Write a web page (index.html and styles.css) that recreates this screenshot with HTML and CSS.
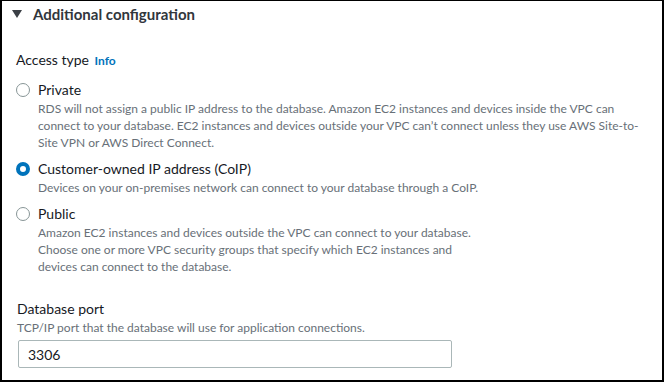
FILE: index.html
```html
<!DOCTYPE html>
<html lang="en">
<head>
    <meta charset="UTF-8">
    <title>Additional configuration</title>

    <link rel="stylesheet" href="styles.css">
</head>
<body>
    <div class="panel">
        <div class="panel-header">
            <svg class="caret" width="10" height="8" viewBox="0 0 10 8"><polygon points="0,0 10,0 5,8" fill="#3b3f45"/></svg>
            <span class="panel-title">Additional configuration</span>
        </div>
        <div class="panel-body">
            <div class="field">
                <div class="field-label">Access type <a class="info" href="#">Info</a></div>
                <div class="radio-group">
                    <label class="radio">
                        <span class="radio-control"></span>
                        <span class="radio-text">
                            <span class="radio-label">Private</span>
                            <span class="radio-desc">RDS will not assign a public IP address to the database. Amazon EC2 instances and devices inside the VPC can connect to your database. EC2 instances and devices outside your VPC can’t connect unless they use AWS Site-to-Site VPN or AWS Direct Connect.</span>
                        </span>
                    </label>
                    <label class="radio checked">
                        <span class="radio-control"></span>
                        <span class="radio-text">
                            <span class="radio-label">Customer-owned IP address (CoIP)</span>
                            <span class="radio-desc">Devices on your on-premises network can connect to your database through a CoIP.</span>
                        </span>
                    </label>
                    <label class="radio">
                        <span class="radio-control"></span>
                        <span class="radio-text">
                            <span class="radio-label">Public</span>
                            <span class="radio-desc narrow">Amazon EC2 instances and devices outside the VPC can connect to your database.</span>
                            <span class="radio-desc narrow">Choose one or more VPC security groups that specify which EC2 instances and devices can connect to the database.</span>
                        </span>
                    </label>
                </div>
            </div>
            <div class="field port">
                <div class="field-label">Database port</div>
                <div class="field-desc">TCP/IP port that the database will use for application connections.</div>
                <input class="text-input" type="text" value="3306">
            </div>
        </div>
    </div>
</body>
</html>
```

FILE: styles.css
```css
body {
    margin: 0;
    font-family: Lato, "Open Sans", sans-serif;
    color: #16191f;
    background: #ffffff;
}

.panel {
    height: 100vh;
    box-sizing: border-box;
    border: 2px solid #000000;
    border-top-width: 1px;
}

.panel-header {
    display: flex;
    align-items: center;
    gap: 11px;
    padding: 3px 10px;
    height: 20px;
}

.panel-title {
    font-size: 15px;
    font-weight: bold;
    color: #31363c;
    line-height: 20px;
}

.panel-body {
    padding: 23px 14px 0 14px;
}

.field-label {
    font-size: 14px;
    line-height: 20px;
}

.info {
    font-size: 12px;
    font-weight: bold;
    color: #0073bb;
    text-decoration: none;
    margin-left: 2px;
}

.radio-group {
    display: flex;
    flex-direction: column;
    gap: 8px;
    margin-top: 9px;
}

.radio {
    display: flex;
    gap: 8px;
}

.radio-control {
    flex: none;
    width: 14px;
    height: 14px;
    margin-top: 3px;
    box-sizing: border-box;
    border: 1.5px solid #879596;
    border-radius: 50%;
}

.radio.checked .radio-control {
    border: 4px solid #0073bb;
    background: #ffffff;
}

.radio-text {
    display: flex;
    flex-direction: column;
}

.radio-label {
    font-size: 14px;
    line-height: 20px;
}

.radio-desc,
.field-desc {
    font-size: 12px;
    line-height: 17px;
    color: #687078;
}

.radio-desc {
    padding-right: 4px;
}

.radio-desc.narrow {
    max-width: 455px;
    padding-right: 0;
}

.port {
    margin-top: 24px;
    padding-left: 1px;
}

.text-input {
    display: block;
    margin-top: 4px;
    margin-left: 1px;
    width: 434px;
    height: 28px;
    box-sizing: border-box;
    padding: 0 9px;
    border: 1px solid #aab7b8;
    border-radius: 2px;
    font-family: inherit;
    font-size: 14px;
    color: #16191f;
    outline: none;
}
```
